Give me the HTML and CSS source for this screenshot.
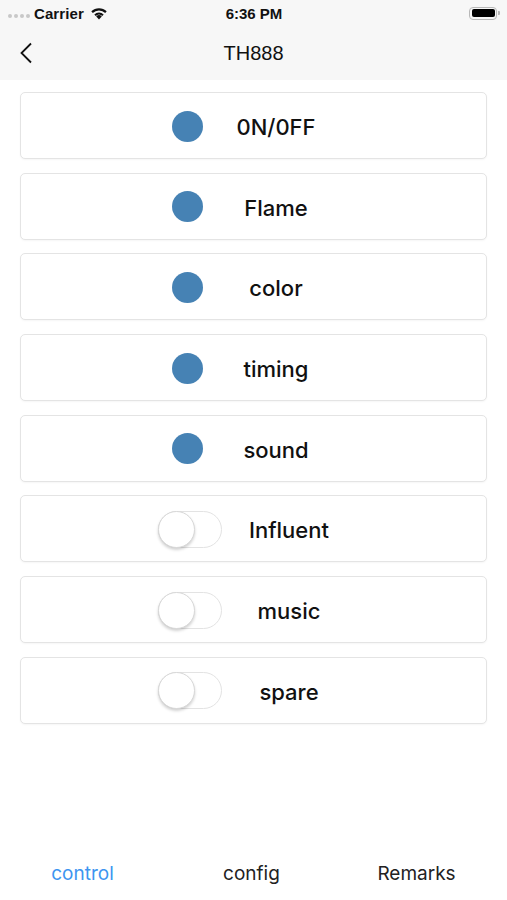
FILE: index.html
```html
<!DOCTYPE html>
<html>
<head>
<meta charset="utf-8">
<link rel="stylesheet" href="styles.css">
</head>
<body>
<div class="screen">
  <header class="top">
    <div class="status">
      <div class="status-left">
        <span class="dots"><i></i><i></i><i></i><i></i></span>
        <span class="carrier">Carrier</span>
        <svg class="wifi" width="18" height="14" viewBox="0 0 18 14">
          <path d="M9 13.5 L6.2 10.4 A4 4 0 0 1 11.8 10.4 Z" fill="#111"/>
          <path d="M4.3 8.4 A6.8 6.8 0 0 1 13.7 8.4 L12.3 9.9 A4.9 4.9 0 0 0 5.7 9.9 Z" fill="#111"/>
          <path d="M1.3 5.3 A11 11 0 0 1 16.7 5.3 L15.2 6.9 A8.9 8.9 0 0 0 2.8 6.9 Z" fill="#111"/>
        </svg>
      </div>
      <div class="time">6:36 PM</div>
      <div class="status-right">
        <span class="battery"><span class="level"></span></span><span class="nub"></span>
      </div>
    </div>
    <nav class="navbar">
      <svg class="back" width="14" height="22" viewBox="0 0 14 22">
        <path d="M12 1.5 L2.5 11 L12 20.5" fill="none" stroke="#111" stroke-width="1.8"/>
      </svg>
      <div class="title">TH888</div>
    </nav>
  </header>

  <main class="list">
    <div class="card"><span class="dot"></span><span class="label">0N/0FF</span></div>
    <div class="card"><span class="dot"></span><span class="label">Flame</span></div>
    <div class="card"><span class="dot"></span><span class="label">color</span></div>
    <div class="card"><span class="dot"></span><span class="label">timing</span></div>
    <div class="card"><span class="dot"></span><span class="label">sound</span></div>
    <div class="card toggle-card"><span class="switch"><span class="knob"></span></span><span class="label">Influent</span></div>
    <div class="card toggle-card"><span class="switch"><span class="knob"></span></span><span class="label">music</span></div>
    <div class="card toggle-card"><span class="switch"><span class="knob"></span></span><span class="label">spare</span></div>
  </main>

  <footer class="tabbar">
    <div class="tab active">control</div>
    <div class="tab">config</div>
    <div class="tab">Remarks</div>
  </footer>
</div>
</body>
</html>
```

FILE: styles.css
```css
* { box-sizing: border-box; }
html, body { margin: 0; padding: 0; background: #fff; }
body { font-family: "Liberation Sans", Arial, sans-serif; color: #111; }

.screen {
  width: 507px;
  height: 900px;
  display: flex;
  flex-direction: column;
}

.top { background: #f7f7f7; height: 80px; }

.status {
  height: 26px;
  display: flex;
  align-items: center;
  justify-content: space-between;
  padding: 0 7px 0 8px;
}
.status-left { display: flex; align-items: center; width: 140px; }
.dots { display: flex; gap: 2px; margin-right: 4px; margin-top: 6px; }
.dots i { width: 4px; height: 4px; border-radius: 50%; background: #c8c8c8; display: block; }
.carrier { font-size: 15px; font-weight: 600; letter-spacing: 0.1px; }
.wifi { margin-left: 6px; margin-top: -1px; }
.time { font-size: 15px; font-weight: 600; text-align: center; flex: 1; }
.status-right { width: 140px; display: flex; justify-content: flex-end; align-items: center; }
.battery {
  width: 28px; height: 13px;
  border: 1px solid #b8b8b8;
  border-radius: 4px;
  padding: 1.5px;
  display: block;
}
.battery .level { display: block; width: 100%; height: 100%; background: #000; border-radius: 2px; }
.nub { width: 2px; height: 4px; background: #b8b8b8; border-radius: 0 1px 1px 0; margin-left: 1px; }

.navbar {
  height: 54px;
  display: flex;
  align-items: center;
  position: relative;
}
.back { position: absolute; left: 19px; top: 16px; }
.title { flex: 1; text-align: center; font-size: 20px; }

.list {
  flex: 1;
  padding: 12px 20px 0 20px;
  display: flex;
  flex-direction: column;
  gap: 13.7px;
}
.card {
  height: 67px;
  border: 1px solid #e4e4e4;
  border-radius: 5px;
  background: #fff;
  box-shadow: 0 1px 2px rgba(0,0,0,0.04);
  display: flex;
  align-items: center;
  padding-left: 151px;
}
.dot {
  width: 31px; height: 31px;
  border-radius: 50%;
  background: #4682b4;
  flex: none;
  margin-top: 1px;
}
.label {
  width: 146px;
  text-align: center;
  font-family: Inter, "Liberation Sans", sans-serif;
  font-size: 22px;
  font-weight: 500;
  color: #111;
  padding-top: 3px;
}
.toggle-card { padding-left: 137px; }
.toggle-card .label { width: 134px; }
.switch {
  width: 64px; height: 37px;
  border: 1px solid #e3e3e3;
  border-radius: 19px;
  background: #fff;
  position: relative;
  flex: none;
  margin-top: 1px;
}
.knob {
  position: absolute;
  left: -1px; top: -1px;
  width: 37px; height: 37px;
  border-radius: 50%;
  background: #fff;
  border: 1px solid #d8d8d8;
  box-shadow: 0 2px 3px rgba(0,0,0,0.18);
}

.tabbar {
  height: 54px;
  display: flex;
  align-items: center;
}
.tab {
  flex: 1;
  text-align: center;
  font-family: Inter, "Liberation Sans", sans-serif;
  font-size: 19px;
  color: #222;
}
.tab.active { color: #3d95f0; }
.tab:first-child { padding-right: 4px; }
.tab:last-child { padding-right: 8px; }
```
